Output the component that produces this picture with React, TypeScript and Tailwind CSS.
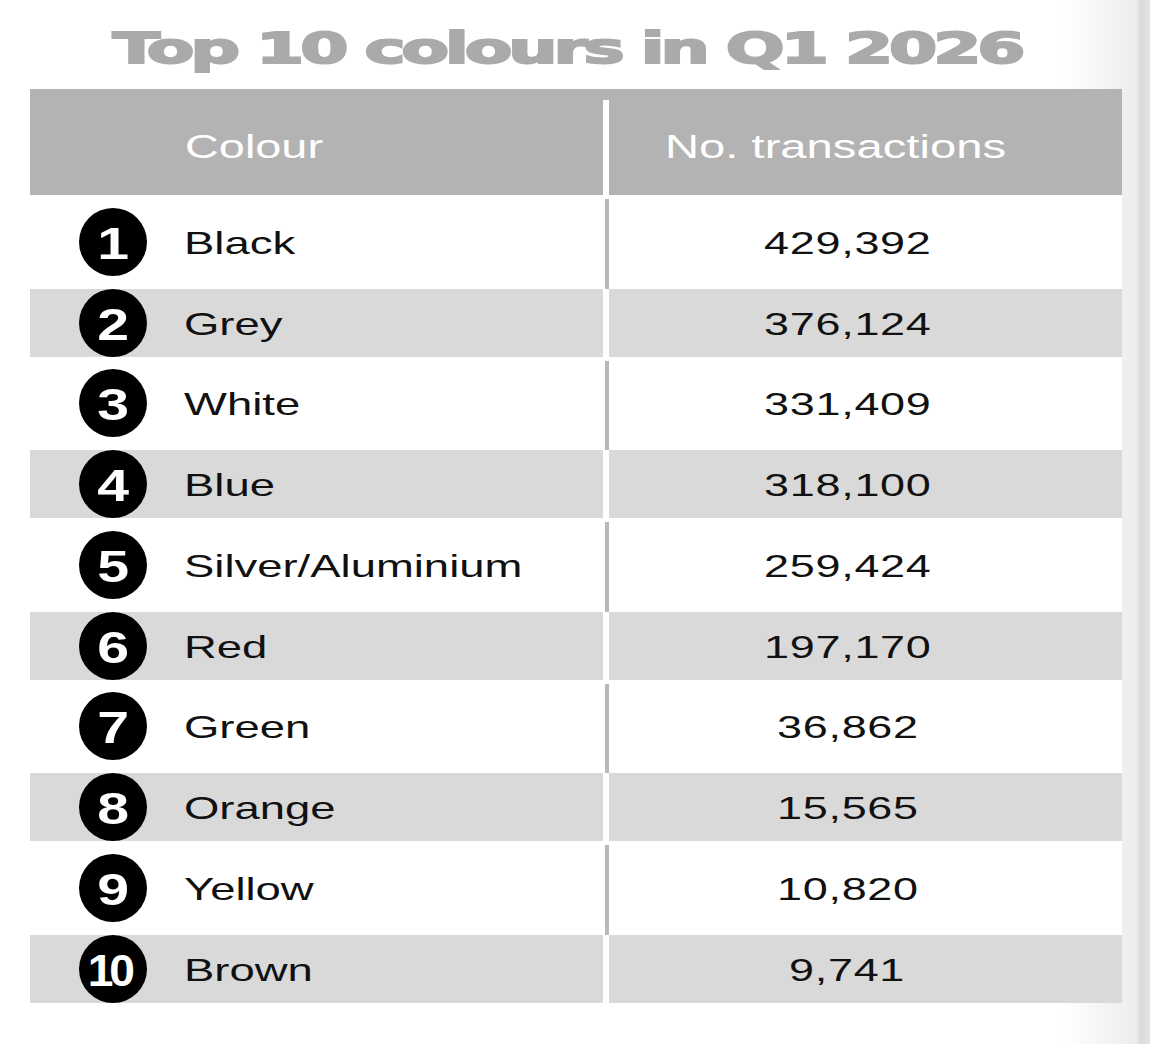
const rows = [
  { rank: '1', name: 'Black', count: '429,392' },
  { rank: '2', name: 'Grey', count: '376,124' },
  { rank: '3', name: 'White', count: '331,409' },
  { rank: '4', name: 'Blue', count: '318,100' },
  { rank: '5', name: 'Silver/Aluminium', count: '259,424' },
  { rank: '6', name: 'Red', count: '197,170' },
  { rank: '7', name: 'Green', count: '36,862' },
  { rank: '8', name: 'Orange', count: '15,565' },
  { rank: '9', name: 'Yellow', count: '10,820' },
  { rank: '10', name: 'Brown', count: '9,741' },
];

function Rank({ n }: { n: string }) {
  const double = n.length > 1;
  return (
    <div className="w-[68px] h-[68px] shrink-0 rounded-full bg-black flex items-center justify-center pt-[4px]">
      <span
        className={
          double
            ? "inline-block text-[44px] leading-none font-bold text-white tracking-[-4px] scale-x-[1.05] pr-[8px]"
            : "inline-block text-[44px] leading-none font-bold text-white scale-x-[1.3]"
        }
      >
        {n}
      </span>
    </div>
  );
}

export default function App() {
  return (
    <div className="min-h-[1044px] w-full bg-[linear-gradient(to_right,#ffffff_1062px,#ececec_1136px,#dadada_1141px,#e3e3e3_1150px)] font-['Liberation_Sans',Arial,sans-serif] text-[#111]">
      <div className="w-[1092px] ml-[30px]">
        {/* Title */}
        <div className="h-[89px] flex justify-center pt-[27px] pr-[17px]">
          <h1 className="inline-block font-['DejaVu_Sans',sans-serif] font-bold text-[43px] leading-none text-[#aaaaaa] [-webkit-text-stroke:2px_#aaaaaa] tracking-[-2.5px] scale-x-[1.61] origin-center">
            Top 10 colours in Q1 2026
          </h1>
        </div>

        {/* Header */}
        <div className="h-[106px] grid grid-cols-[573px_6px_513px]">
          <div className="bg-[#b3b3b3] flex items-center pl-[155px] pt-[8px]">
            <span className="inline-block text-[33px] leading-none text-white scale-x-[1.42] origin-left">Colour</span>
          </div>
          <div className="flex flex-col">
            <div className="h-[11px] bg-[#b3b3b3]" />
            <div className="flex-1 bg-white" />
          </div>
          <div className="bg-[#b3b3b3] flex items-center pl-[56px] pt-[8px]">
            <span className="inline-block text-[33px] leading-none text-white scale-x-[1.43] origin-left">No. transactions</span>
          </div>
        </div>

        {/* Rows */}
        {rows.map((r, i) => {
          const shaded = i % 2 === 1;
          return (
            <div
              key={r.rank}
              className={`grid grid-cols-[573px_6px_513px] ${shaded ? 'h-[68px]' : 'h-[93.5px]'}`}
            >
              <div className={`flex items-center pl-[49px] ${shaded ? 'bg-[#d9d9d9]' : 'bg-white'}`}>
                <Rank n={r.rank} />
                <span className="ml-[37px] pt-[2px] inline-block text-[32px] leading-none scale-x-[1.42] origin-left">
                  {r.name}
                </span>
              </div>
              <div className={`flex pt-[4px] ${shaded ? 'bg-white' : ''}`}>
                {!shaded && <div className="w-[4px] ml-[2px] bg-[#b8b8b8]" />}
              </div>
              <div className={`flex items-center justify-center pr-[36px] pt-[3px] ${shaded ? 'bg-[#d9d9d9]' : 'bg-white'}`}>
                <span className="inline-block text-[31px] leading-none scale-x-[1.45] tracking-[0.5px] origin-center">
                  {r.count}
                </span>
              </div>
            </div>
          );
        })}
      </div>
    </div>
  );
}
